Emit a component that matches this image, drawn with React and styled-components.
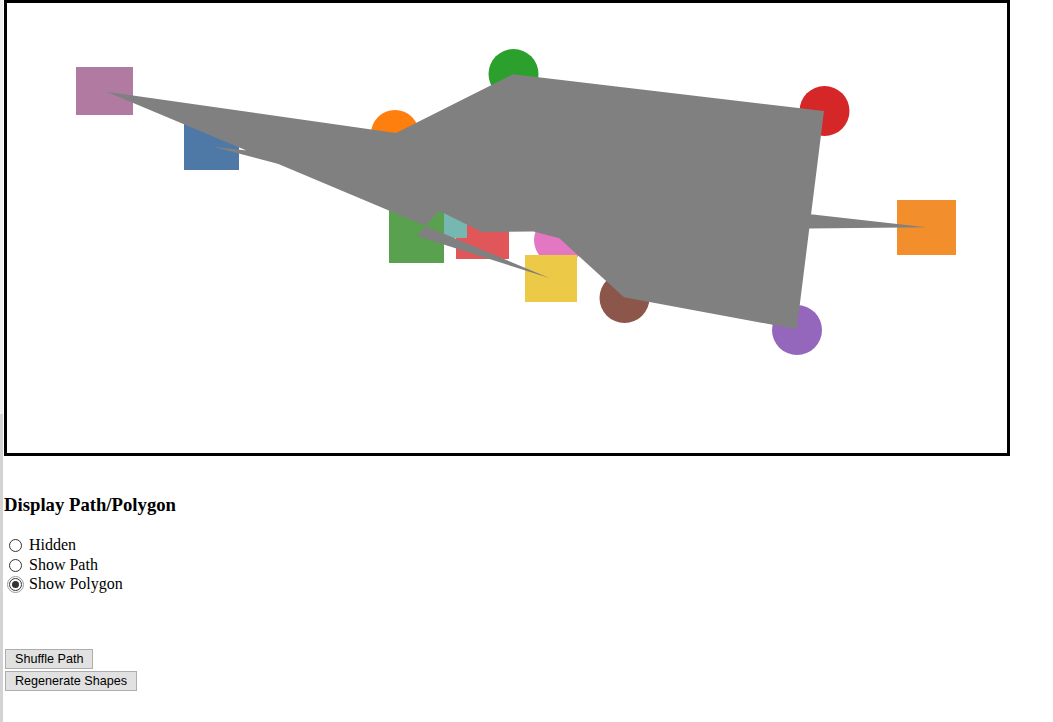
import React, { useState } from "react";
import styled, { createGlobalStyle } from "styled-components";

const GlobalStyle = createGlobalStyle`
  html, body {
    margin: 0;
    padding: 0;
    background: #ffffff;
  }
  body {
    font-family: "Liberation Serif", "Times New Roman", serif;
    color: #000;
  }
`;

const Page = styled.div`
  display: flex;
  min-height: 722px;
`;

const Strip = styled.div`
  width: 3px;
  flex: 0 0 3px;
  background: linear-gradient(to bottom, #efefef 0, #efefef 414px, #d3d3d3 414px, #d3d3d3 100%);
`;

const Content = styled.div`
  padding-left: 1px;
  display: flex;
  flex-direction: column;
  align-items: flex-start;
`;

const Canvas = styled.svg`
  display: block;
  width: 1000px;
  height: 450px;
  border: 3px solid #000;
  background: #fff;
`;

const Heading = styled.h3`
  font-family: "Liberation Serif", "Times New Roman", serif;
  font-size: 18.72px;
  font-weight: bold;
  margin: 38px 0 20px 0;
  line-height: 21px;
`;

const RadioGroup = styled.div`
  display: flex;
  flex-direction: column;
`;

const RadioRow = styled.label`
  display: flex;
  align-items: flex-start;
  height: 19.6px;
  font-size: 16px;
  line-height: 19.6px;
  font-family: "Liberation Serif", "Times New Roman", serif;
`;

const Radio = styled.input.attrs({ type: "radio" })`
  appearance: none;
  -webkit-appearance: none;
  width: 13px;
  height: 13px;
  margin: 4px 7px 0 5px;
  border: 1px solid #333;
  border-radius: 50%;
  background: #fff;
  box-sizing: border-box;
  position: relative;
  flex: 0 0 13px;
  outline: ${(p) => (p.checked ? "1px solid #9a9a9a" : "none")};
  outline-offset: 1px;

  &:checked::after {
    content: "";
    position: absolute;
    left: 2px;
    top: 2px;
    width: 7px;
    height: 7px;
    border-radius: 50%;
    background: #333;
  }
`;

const ButtonStack = styled.div`
  display: flex;
  flex-direction: column;
  align-items: flex-start;
  gap: 2px;
  margin-top: 55px;
  margin-left: 1px;
`;

const Button = styled.button`
  height: 20px;
  padding: 0 9px;
  border: 1px solid #adadad;
  background: #e1e1e1;
  color: #000;
  font-family: "Liberation Sans", Arial, sans-serif;
  font-size: 12.6px;
  line-height: 18px;
  border-radius: 0;
  cursor: default;
`;

const squares = [
  { x: 69, y: 64, w: 57, h: 48, fill: "#b07aa1" },
  { x: 177, y: 120, w: 55, h: 47, fill: "#4e79a7" },
  { x: 890, y: 197, w: 59, h: 55, fill: "#f28e2b" },
  { x: 449, y: 202, w: 53, h: 54, fill: "#e15759" },
  { x: 404, y: 181, w: 56, h: 54, fill: "#76b7b2" },
  { x: 382, y: 206, w: 55, h: 54, fill: "#59a14f" },
];

const circles = [
  { cx: 388, cy: 131, r: 24, fill: "#ff7f0e" },
  { cx: 506.5, cy: 71, r: 25, fill: "#2ca02c" },
  { cx: 817.5, cy: 108, r: 25, fill: "#d62728" },
  { cx: 790, cy: 327, r: 25, fill: "#9467bd" },
  { cx: 617.5, cy: 295, r: 25, fill: "#8c564b" },
  { cx: 552, cy: 237, r: 25, fill: "#e377c2" },
];

const yellow = { x: 518, y: 252, w: 52, h: 47, fill: "#edc948" };

const pathPoints = [
  [99.5, 88.7],
  [389, 130],
  [506, 71.3],
  [817, 108],
  [789.7, 326.3],
  [617, 294.3],
  [552.3, 235.3],
  [206, 143.7],
  [919, 224.3],
  [475, 229],
  [432, 207.7],
  [410, 233],
  [543, 275.3],
];

export default function App() {
  const [mode, setMode] = useState("polygon");
  const pts = pathPoints.map((p) => p.join(",")).join(" ");
  return (
    <>
      <GlobalStyle />
      <Page>
        <Strip />
        <Content>
          <Canvas viewBox="0 0 1000 450">
            {circles.map((c, i) => (
              <circle key={"c" + i} cx={c.cx} cy={c.cy} r={c.r} fill={c.fill} />
            ))}
            {squares.map((s, i) => (
              <rect key={"s" + i} x={s.x} y={s.y} width={s.w} height={s.h} fill={s.fill} />
            ))}
            <rect x={yellow.x} y={yellow.y} width={yellow.w} height={yellow.h} fill={yellow.fill} />
            {mode === "polygon" && <polygon points={pts} fill="#808080" />}
            {mode === "path" && (
              <polyline points={pts} fill="none" stroke="#808080" strokeWidth="2" />
            )}
          </Canvas>
          <Heading>Display Path/Polygon</Heading>
          <RadioGroup>
            <RadioRow>
              <Radio name="disp" checked={mode === "hidden"} onChange={() => setMode("hidden")} />
              Hidden
            </RadioRow>
            <RadioRow>
              <Radio name="disp" checked={mode === "path"} onChange={() => setMode("path")} />
              Show Path
            </RadioRow>
            <RadioRow>
              <Radio name="disp" checked={mode === "polygon"} onChange={() => setMode("polygon")} />
              Show Polygon
            </RadioRow>
          </RadioGroup>
          <ButtonStack>
            <Button>Shuffle Path</Button>
            <Button>Regenerate Shapes</Button>
          </ButtonStack>
        </Content>
      </Page>
    </>
  );
}
